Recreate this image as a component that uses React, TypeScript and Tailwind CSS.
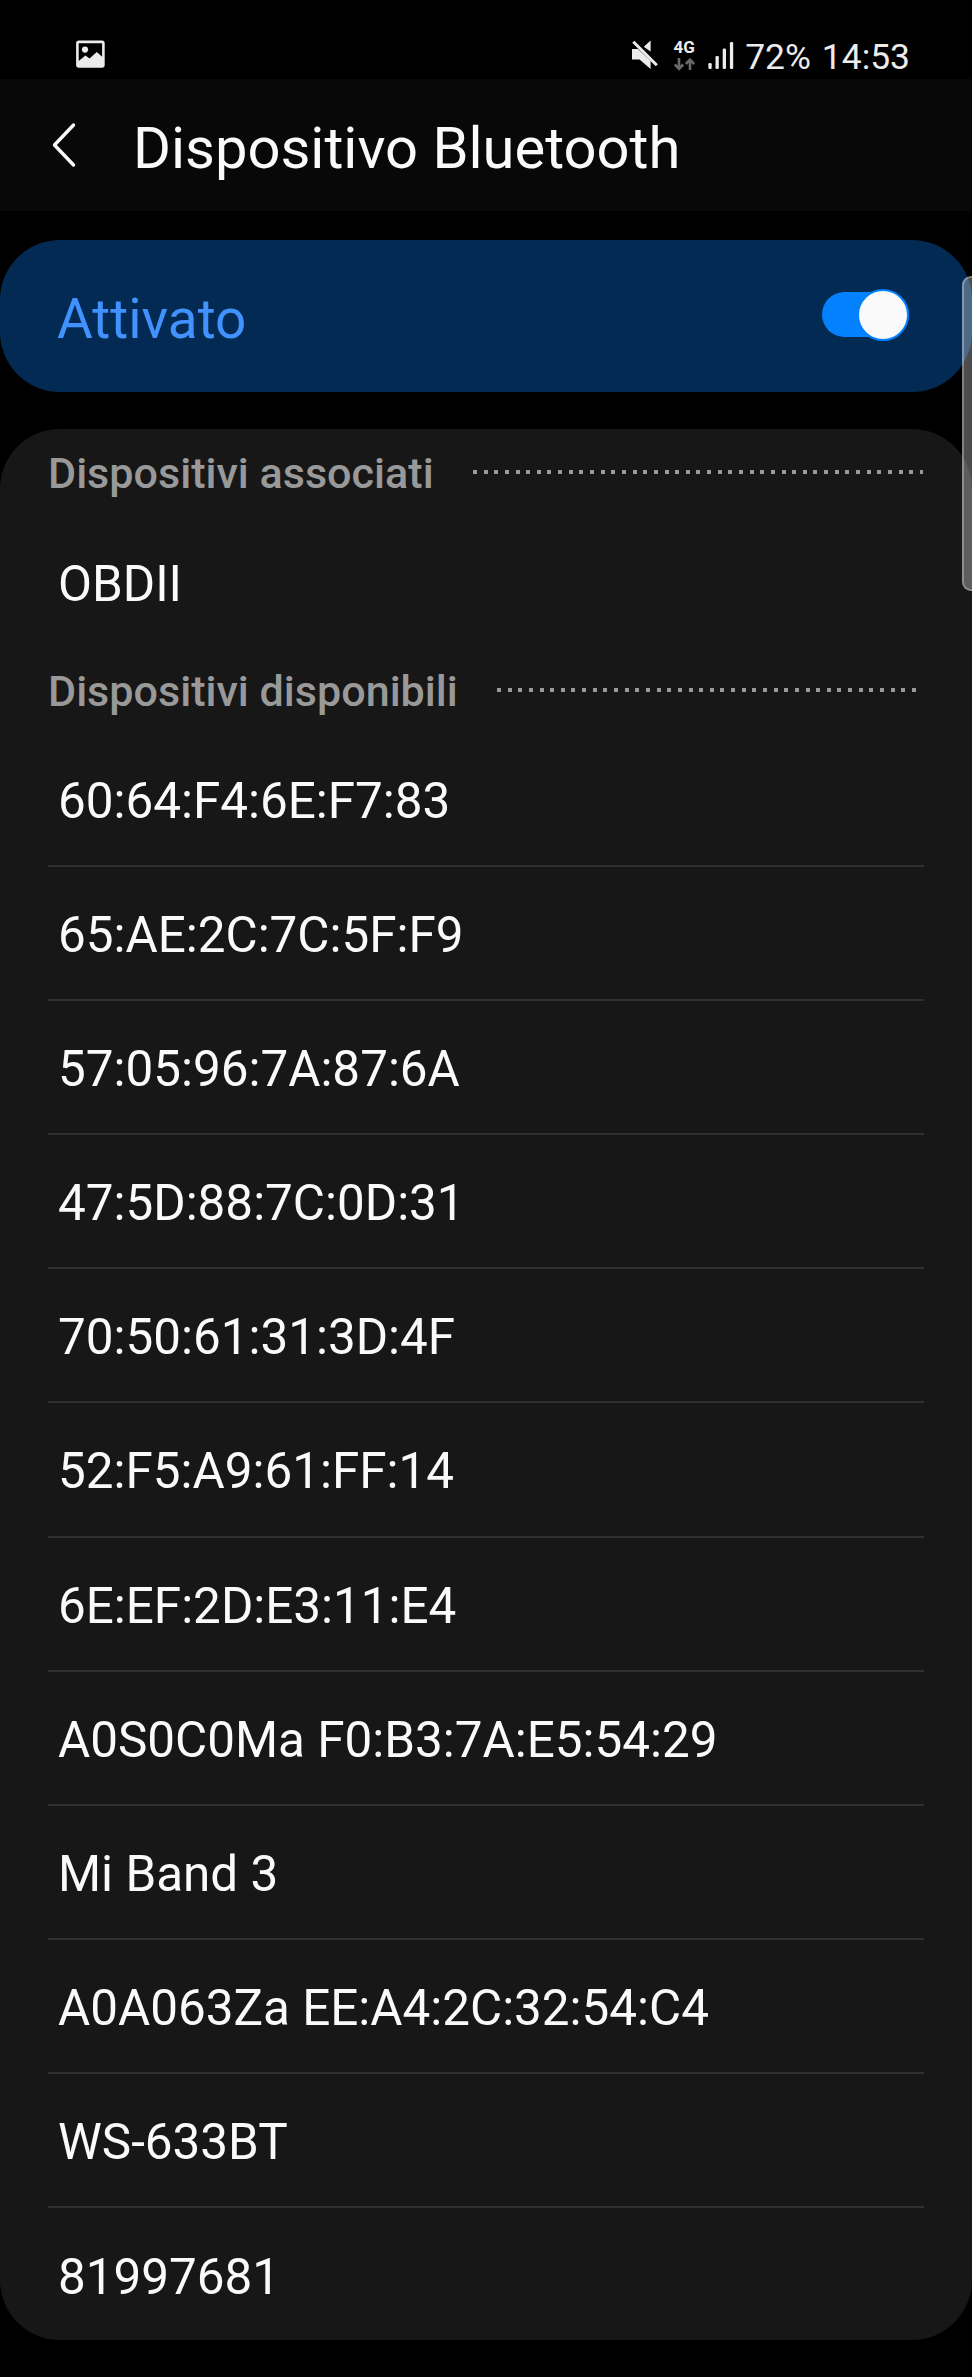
const pairedDevices = ['OBDII']

const availableDevices = [
  '60:64:F4:6E:F7:83',
  '65:AE:2C:7C:5F:F9',
  '57:05:96:7A:87:6A',
  '47:5D:88:7C:0D:31',
  '70:50:61:31:3D:4F',
  '52:F5:A9:61:FF:14',
  '6E:EF:2D:E3:11:E4',
  'A0S0C0Ma F0:B3:7A:E5:54:29',
  'Mi Band 3',
  'A0A063Za EE:A4:2C:32:54:C4',
  'WS-633BT',
  '81997681',
]

function StatusBar() {
  return (
    <div className="flex h-[79px] items-start pl-[76px] pr-[62px] text-[#ececec]">
      <svg className="mt-[40px] h-[28px] w-[29px]" viewBox="0 0 29 28">
        <rect x="1.4" y="1.9" width="26" height="24.6" rx="1.5" fill="none" stroke="currentColor" strokeWidth="2.6" />
        <circle cx="9" cy="9.6" r="3.1" fill="currentColor" />
        <path d="M2 21.5L9.5 15.5L13.5 18.5L20.8 12L27 17.5V27H2Z" fill="currentColor" />
      </svg>
      {/* Muted speaker */}
      <svg className="ml-auto mt-[40px] h-[30px] w-[27px]" viewBox="0 0 27 30" fill="currentColor">
        <path d="M0 9H6L18.6 21V29L7.5 19.5H0Z" />
        <path d="M18.6 0.5V11.5L11.8 6.8Z" />
        <path d="M1.3 1.8L24.8 25.2" stroke="currentColor" strokeWidth="3" />
      </svg>
      <div className="ml-[13px] mt-[40px] flex w-[24px] flex-col items-center">
        <span className="text-[17px] font-bold leading-[15px]">4G</span>
        <svg className="mt-[3px] h-[13px] w-[21px]" viewBox="0 0 21 13" fill="none" stroke="#6a6a6a" strokeWidth="2.6">
          <path d="M5 0V11M0.8 6.5L5 10.8L9.2 6.5" />
          <path d="M16 12V1.5M11.8 6L16 1.7L20.2 6" />
        </svg>
      </div>
      <svg className="ml-[12px] mt-[42px] h-[27px] w-[26px]" viewBox="0 0 26 27" fill="currentColor">
        <rect x="0.4" y="21" width="3.3" height="6" rx="1.2" />
        <rect x="7.5" y="14" width="3.3" height="13" rx="1.2" />
        <rect x="14.7" y="6.5" width="3.3" height="20.5" rx="1.2" />
        <rect x="21.9" y="0" width="3.3" height="27" rx="1.2" />
      </svg>
      <span className="ml-[11px] mt-[36px] text-[35.4px] leading-[42px]">72%</span>
      <span className="ml-[11px] mt-[36px] text-[35.4px] leading-[42px]">14:53</span>
    </div>
  )
}

function SectionTitle({ children }: { children: string }) {
  return (
    <div className="flex h-[92px] items-center">
      <h2 className="mt-[-2px] text-[43.1px] font-medium leading-[50px] text-[#999999]">{children}</h2>
      <div className="ml-[39px] mr-[1px] mt-[-6px] h-[4px] flex-1 bg-[repeating-linear-gradient(90deg,#999999_0px,#999999_4px,transparent_4px,transparent_10.64px)]" />
    </div>
  )
}

export default function App() {
  return (
    <div className="relative h-[2377px] w-[972px] overflow-hidden bg-black font-['Roboto',sans-serif] text-[#fafafa]">
      <StatusBar />

      <header className="flex h-[132px] items-center bg-[#080808] pl-[51px]">
        <svg className="h-[46px] w-[26px]" viewBox="0 0 26 46" fill="none" stroke="currentColor" strokeWidth="3.4" strokeLinecap="round" strokeLinejoin="round">
          <path d="M22.5 3L3.5 23L22.5 43" />
        </svg>
        <h1 className="ml-[56px] mt-[5px] text-[57.9px] leading-[70px]">Dispositivo Bluetooth</h1>
      </header>

      <section className="mt-[29px] flex h-[152px] items-center rounded-[60px] bg-[#032a52] pl-[57px] pr-[63px]">
        <span className="mt-[5px] text-[54.9px] leading-[64px] text-[#4191ff]">Attivato</span>
        <div className="mb-[3px] ml-auto flex h-[45px] w-[87px] items-center justify-end rounded-full bg-[#0381fe]">
          <div className="size-[52px] shrink-0 rounded-full border-[2.5px] border-[#0381fe] bg-[#fafafa]" />
        </div>
      </section>

      <main className="mt-[37px] h-[1911px] rounded-[60px] bg-[#171717] px-[48px]">
        <SectionTitle>Dispositivi associati</SectionTitle>
        <ul>
          {pairedDevices.map((name) => (
            <li key={name} className="flex h-[126px] items-center pl-[10px] text-[49.4px]">
              {name}
            </li>
          ))}
        </ul>
        <SectionTitle>Dispositivi disponibili</SectionTitle>
        <ul className="mt-[-6px] divide-y-2 divide-[#303030]">
          {availableDevices.map((name) => (
            <li key={name} className="flex h-[134.1px] items-center pl-[10px] pt-[4px] text-[49.4px]">
              {name}
            </li>
          ))}
        </ul>
      </main>

      {/* Scroll thumb */}
      <div className="absolute right-[-8px] top-[276px] h-[315px] w-[18px] rounded-[10px] border-[2.5px] border-white/30 bg-white/30" />
    </div>
  )
}
